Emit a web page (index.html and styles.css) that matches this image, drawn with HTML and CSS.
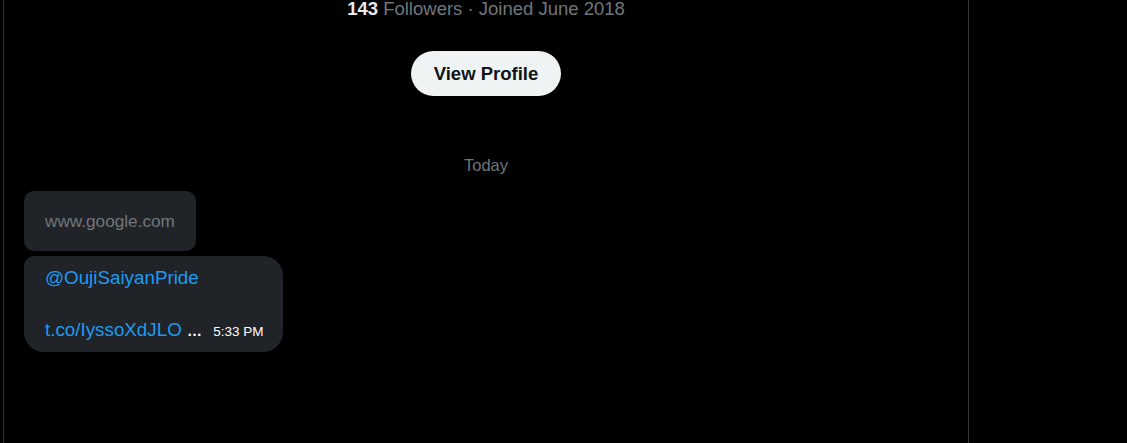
FILE: index.html
```html
<!DOCTYPE html>
<html lang="en">
<head>
  <meta charset="UTF-8">
  <title>Messages</title>
  <link rel="stylesheet" href="styles.css">
</head>
<body>
  <div class="wrapper">
    <main class="conversation">
      <div class="profile-card">
        <p class="profile-stats"><strong>143</strong> Followers · Joined June 2018</p>
        <a href="#" class="profile-btn">View Profile</a>
      </div>

      <div class="day-label">Today</div>

      <div class="messages">
        <div class="bubble bubble-first">
          <span class="link-preview">www.google.com</span>
        </div>
        <div class="bubble bubble-last">
          <a href="#" class="mention">@OujiSaiyanPride</a>
          <br><br>
          <a href="#" class="mention">t.co/IyssoXdJLO</a> <span class="more">…</span>
          <span class="time">5:33 PM</span>
        </div>
      </div>
    </main>
  </div>
</body>
</html>
```

FILE: styles.css
```css
html, body {
  margin: 0;
  padding: 0;
  background-color: #000000;
  color: #e7e9ea;
  font-family: 'Segoe UI', 'Liberation Sans', Arial, sans-serif;
}

.wrapper {
  display: flex;
  padding-left: 3px;
}

.conversation {
  width: 964px;
  min-height: 443px;
  border-left: 1px solid #2f3336;
  border-right: 1px solid #2f3336;
  box-sizing: content-box;
}

.profile-card {
  display: flex;
  flex-direction: column;
  align-items: center;
}

.profile-stats {
  margin: 0;
  font-size: 18.5px;
  line-height: 18px;
  color: #71767b;
}

.profile-stats strong {
  color: #e7e9ea;
  font-weight: bold;
}

.profile-btn {
  margin-top: 33px;
  display: flex;
  align-items: center;
  justify-content: center;
  width: 150px;
  height: 45px;
  border-radius: 23px;
  background-color: #eff3f4;
  color: #0f1419;
  font-size: 18.5px;
  font-weight: bold;
  text-decoration: none;
}

.day-label {
  margin-top: 57px;
  text-align: center;
  font-size: 16.5px;
  line-height: 25px;
  color: #71767b;
}

.messages {
  margin-top: 13px;
  padding: 0 20px;
  display: flex;
  flex-direction: column;
  align-items: flex-start;
  gap: 5px;
}

.bubble {
  background-color: #202327;
  font-size: 18.8px;
  line-height: 26px;
}

.bubble-first {
  height: 26px;
  padding: 17px 21px 17px 21px;
  border-radius: 10px;
}

.link-preview {
  font-size: 17.2px;
  color: #71767b;
}

.bubble-last {
  padding: 9px 20px 7px 21px;
  border-radius: 10px 20px 20px 20px;
}

.mention {
  color: #1d9bf0;
  text-decoration: none;
}

.more {
  color: #ffffff;
  font-weight: bold;
  font-size: 15px;
}

.time {
  margin-left: 6px;
  font-size: 13.5px;
  color: #ffffff;
}
```
